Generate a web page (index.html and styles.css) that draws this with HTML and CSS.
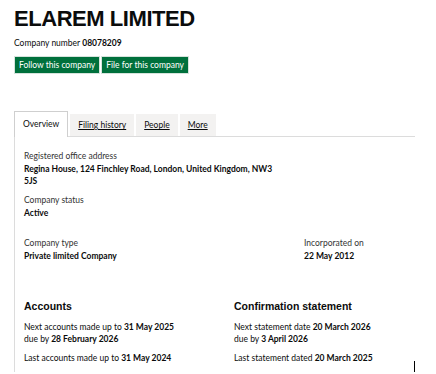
FILE: index.html
```html
<!DOCTYPE html>
<html lang="en">
<head>
<meta charset="utf-8">
<title>ELAREM LIMITED</title>
<link rel="stylesheet" href="styles.css">
</head>
<body>
<div class="page">
  <h1 class="title">ELAREM LIMITED</h1>
  <p class="company-number">Company number <strong>08078209</strong></p>
  <div class="actions">
    <a class="btn" href="#">Follow this company</a>
    <a class="btn" href="#">File for this company</a>
  </div>

  <ul class="tabs">
    <li class="tab tab-active">Overview</li>
    <li class="tab"><a href="#">Filing history</a></li>
    <li class="tab"><a href="#">People</a></li>
    <li class="tab"><a href="#">More</a></li>
  </ul>

  <div class="panel">
    <dl class="field">
      <dt>Registered office address</dt>
      <dd class="address">Regina House, 124 Finchley Road, London, United Kingdom, NW3 5JS</dd>
    </dl>
    <dl class="field">
      <dt>Company status</dt>
      <dd>Active</dd>
    </dl>
    <div class="row-type">
      <dl class="field">
        <dt>Company type</dt>
        <dd>Private limited Company</dd>
      </dl>
      <dl class="field">
        <dt>Incorporated on</dt>
        <dd>22 May 2012</dd>
      </dl>
    </div>
    <div class="row-cols">
      <section class="col">
        <h2>Accounts</h2>
        <p>Next accounts made up to <strong>31 May 2025</strong><br>due by <strong>28 February 2026</strong></p>
        <p>Last accounts made up to <strong>31 May 2024</strong></p>
      </section>
      <section class="col">
        <h2>Confirmation statement</h2>
        <p>Next statement date <strong>20 March 2026</strong><br>due by <strong>3 April 2026</strong></p>
        <div class="last-line">
          <p>Last statement dated <strong>20 March 2025</strong></p>
          <span class="caret"></span>
        </div>
      </section>
    </div>
  </div>
</div>
</body>
</html>
```

FILE: styles.css
```css
html, body {
  margin: 0;
  padding: 0;
  background: #fff;
}
body {
  font-family: Lato, "Noto Sans", sans-serif;
  color: #0b0c0c;
  font-size: 8.5px;
}
.page {
  padding: 8px 0 0 14px;
  width: 401px;
}
.title {
  margin: 0;
  font-family: "Liberation Sans", Arial, sans-serif;
  font-weight: bold;
  font-size: 22px;
  line-height: 22px;
  letter-spacing: -0.45px;
}
.company-number {
  margin: 7px 0 0;
  line-height: 12px;
}
.company-number strong {
  font-weight: bold;
}
.actions {
  display: flex;
  gap: 1px;
  margin-top: 7px;
}
.btn {
  display: block;
  background: #00703c;
  color: #fff;
  text-decoration: none;
  height: 18px;
  line-height: 17px;
  padding: 0 4px;
  border: 1px solid #d6e3dc;
  box-sizing: border-box;
}
.tabs {
  list-style: none;
  margin: 37px 0 0;
  padding: 0;
  display: flex;
  align-items: flex-end;
  border-bottom: 1px solid #dcdcdc;
}
.tab {
  background: #f3f2f1;
  height: 22px;
  line-height: 22px;
  padding: 0 8px;
  margin-right: 2px;
}
.tab a {
  color: #0b0c0c;
  text-decoration: underline;
}
.tab-active {
  background: #fff;
  border: 1px solid #cfcfcf;
  border-bottom: none;
  height: 25px;
  line-height: 25px;
  margin-bottom: -1px;
  padding: 0 8px;
}
.panel {
  border-left: 1px solid #dcdcdc;
  padding: 13px 0 0 9px;
}
.field {
  margin: 0 0 7px;
}
.field dt {
  color: #333;
  line-height: 13px;
}
.field dd {
  margin: 0;
  font-weight: bold;
  line-height: 12px;
}
.address {
  width: 252px;
}
.row-type {
  display: grid;
  grid-template-columns: 280px 1fr;
  margin-top: 18px;
}
.row-cols {
  display: grid;
  grid-template-columns: 210px 1fr;
  margin-top: 30px;
}
.col h2 {
  margin: 0 0 8px;
  font-family: "Liberation Sans", Arial, sans-serif;
  font-size: 10.5px;
  line-height: 14px;
}
.col p {
  margin: 0 0 7px;
  line-height: 12px;
}
.last-line {
  display: flex;
  justify-content: space-between;
  align-items: flex-start;
}
.caret {
  display: block;
  flex: 0 0 1px;
  width: 1px;
  height: 11px;
  margin-top: 9px;
  background: #000;
}
```
